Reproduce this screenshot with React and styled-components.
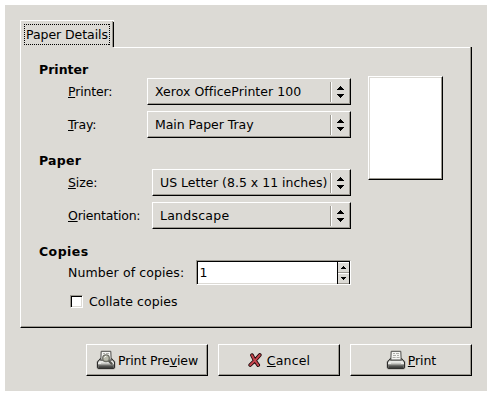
import React from "react";
import styled, { createGlobalStyle } from "styled-components";

const BG = "#dcdad5";
const SHADE = "#9b9890";

const GlobalStyle = createGlobalStyle`
  * { box-sizing: border-box; }
  body {
    margin: 0;
    background: #fff;
    color: #000;
    font-family: "DejaVu Sans", sans-serif;
    font-size: 12.5px;
    line-height: 18px;
  }
`;

const Dialog = styled.main`
  width: 482px;
  height: 386px;
  margin: 5px;
  padding: 15px;
  background: ${BG};
`;

const Tab = styled.div`
  display: flex;
  width: 94px;
  height: 27px;
  padding: 3px 2px 1px 3px;
  border-top: 1px solid #fff;
  border-left: 1px solid #fff;
  border-top-left-radius: 1px;
  background: linear-gradient(#000, #000) right 1px / 1px 100% no-repeat,
    linear-gradient(${SHADE}, ${SHADE}) right 1px top 0 / 1px 100% no-repeat;
`;

const FocusRing = styled.span`
  display: flex;
  align-items: center;
  justify-content: center;
  width: 86px;
  height: 21px;
  white-space: nowrap;
  background:
    repeating-linear-gradient(90deg, #000 0 1px, transparent 1px 2px) top / 100% 1px no-repeat,
    repeating-linear-gradient(90deg, #000 0 1px, transparent 1px 2px) bottom / 100% 1px no-repeat,
    repeating-linear-gradient(#000 0 1px, transparent 1px 2px) left / 1px 100% no-repeat,
    repeating-linear-gradient(#000 0 1px, transparent 1px 2px) right / 1px 100% no-repeat;
`;

const Page = styled.section`
  display: flex;
  gap: 17px;
  width: 452px;
  height: 281px;
  padding: 13px 0 0 18px;
  border-left: 1px solid #fff;
  border-right: 1px solid #000;
  border-bottom: 1px solid #000;
  box-shadow: inset -1px -1px ${SHADE};
  background: linear-gradient(#fff, #fff) 93px 0 / 100% 1px no-repeat;
`;

const Form = styled.div`
  display: flex;
  flex-direction: column;
  gap: 13px;
  width: 312px;
`;

const Group = styled.div`
  display: flex;
  flex-direction: column;
`;

const Heading = styled.h2`
  height: 18px;
  margin: 0;
  padding-top: 1px;
  font-size: 12.5px;
  line-height: 18px;
  font-weight: bold;
  letter-spacing: ${(p) => p.$track || 0}px;
`;

const Row = styled.div`
  display: flex;
  align-items: center;
  justify-content: space-between;
  padding-left: 29px;
  & + & { margin-top: 6px; }
`;

const Text = styled.span`
  white-space: nowrap;
  letter-spacing: ${(p) => p.$track || 0}px;
`;

const Key = styled.span`
  text-decoration: underline;
  text-decoration-thickness: 1px;
  text-underline-offset: 1px;
  text-decoration-skip-ink: none;
`;

const Raised = styled.div`
  border: 1px solid;
  border-color: #fff #000 #000 #fff;
  box-shadow: inset -1px -1px ${SHADE};
`;

const Select = styled(Raised)`
  display: flex;
  align-items: center;
  justify-content: space-between;
  width: ${(p) => p.$width}px;
  height: 27px;
  padding: 0 6px 0 7px;
`;

const SelectEnd = styled.span`
  display: flex;
  align-items: center;
  height: 20px;
  padding-left: 6px;
  border-left: 1px solid ${SHADE};
  box-shadow: inset 1px 0 #fff;
`;

const Preview = styled(Raised)`
  width: 75px;
  height: 104px;
  margin-top: 16px;
  background: #fff;
  box-shadow: inset -1px -1px ${SHADE}, inset 1px 1px ${BG};
`;

const Spin = styled.div`
  display: flex;
  justify-content: space-between;
  width: 155px;
  height: 25px;
  border: 1px solid;
  border-color: ${SHADE} #fff #fff ${SHADE};
  background: #fff;
  box-shadow: inset 1px 1px #000, inset 0 -1px ${BG};
`;

const SpinValue = styled.span`
  padding: 3px 0 0 2.5px;
`;

const SpinButtons = styled.div`
  display: flex;
  flex-direction: column;
  width: 13px;
  height: 22px;
  margin-top: 1px;
  border: solid #000;
  border-width: 0 1px;
  background: ${BG};
`;

const SpinStep = styled.span`
  display: flex;
  align-items: center;
  justify-content: center;
  height: 11px;
  border-top: 1px solid #fff;
  border-bottom: 1px solid ${SHADE};
`;

const CheckRow = styled.label`
  display: flex;
  align-items: center;
  gap: 6px;
  height: 13px;
  margin-top: 10px;
  padding-left: 31px;
`;

const CheckBox = styled.span`
  width: 13px;
  height: 13px;
  border: 1px solid;
  border-color: ${SHADE} #fff #fff ${SHADE};
  background: #fff;
  box-shadow: inset 1px 1px #000, inset -1px -1px ${BG};
`;

const Actions = styled.footer`
  display: flex;
  justify-content: flex-end;
  gap: 10px;
  width: 452px;
  margin-top: 16px;
`;

const Button = styled.button`
  display: flex;
  align-items: center;
  justify-content: center;
  gap: ${(p) => p.$gap || 2}px;
  width: 122px;
  height: 32px;
  padding: 2px 0 0;
  border: 1px solid;
  border-color: #fff #000 #000 #fff;
  border-radius: 0;
  background: ${BG};
  box-shadow: inset -1px -1px ${SHADE};
  color: #000;
  font: inherit;
`;

const Icon = styled.svg`
  display: block;
  flex: none;
`;

const ButtonIcon = styled(Icon)`
  margin-bottom: 2px;
`;

function Arrows() {
  return (
    <Icon width="7" height="12" viewBox="0 0 7 12" shapeRendering="crispEdges">
      <path d="M3 0h1v1h1v1h1v1h1v1H0V3h1V2h1V1h1zM0 8h7v1H6v1H5v1H4v1H3v-1H2v-1H1V9H0z" />
    </Icon>
  );
}

function StepArrow({ down }) {
  return (
    <Icon width="5" height="3" viewBox="0 0 5 3" shapeRendering="crispEdges">
      <path d={down ? "M0 0h5v1H4v1H3v1H2V2H1V1H0z" : "M2 0h1v1h1v1h1v1H0V2h1V1h1z"} />
    </Icon>
  );
}

function PrinterIcon({ preview }) {
  return (
    <ButtonIcon width="20" height="20" viewBox="0 0 20 20">
      <rect x="0.5" y="10" width="19" height="9.5" rx="2.5" fill="#55534f" opacity=".4" />
      <path d="M4.2 8.5h11.6l2.7 3.5v5q0 1.5-1.5 1.5H3q-1.5 0-1.5-1.5v-5z" fill="#8d8d89" stroke="#2c2c2b" />
      <path d="M5.2 1.3h9.6l.4 9.2H4.8z" fill="#f4f4f2" stroke="#4a4a48" />
      <path d="M7 3.5h2m1 0h3M7 5.5h3m1 0h2M6.6 7.5h3m1 0h3" stroke="#a6a6a2" strokeWidth=".9" />
      <path d="M4.5 10h11" stroke="#4c4c4a" />
      <path d="M3.5 10.8h13l1.5 1.7v2H2v-2z" fill="#e9e9e6" />
      <path d="M5 13.3h10" stroke="#bdbdb9" />
      <path d="M2 15.3h16" stroke="#6d6d6a" strokeWidth="1.4" />
      <path d="M2.5 17.2h15" stroke="#41413f" strokeWidth="2" />
      {preview && (
        <>
          <path d="M12.7 10.7l3 3" stroke="#55554f" strokeWidth="2.2" strokeLinecap="round" />
          <circle cx="10" cy="8.2" r="3.3" fill="#b9baac" stroke="#6f7067" strokeWidth="1.3" />
          <path d="M8.3 7.6q.7-1.3 2-1.3" fill="none" stroke="#fff" />
        </>
      )}
    </ButtonIcon>
  );
}

function CancelIcon() {
  return (
    <ButtonIcon width="14" height="16" viewBox="0 0 14 16" fill="none" strokeLinecap="round" strokeLinejoin="round">
      <path d="M4 3.2L6.2 7.5l4 5.6M11.8 3L7.6 7.8 2.2 13" stroke="#1a0506" strokeWidth="3.7" />
      <path d="M4 3.2L6.2 7.5l4 5.6M11.8 3L7.6 7.8 2.2 13" stroke="#c5454e" strokeWidth="2" />
    </ButtonIcon>
  );
}

function Combo({ width, track, children }) {
  return (
    <Select $width={width}>
      <Text $track={track}>{children}</Text>
      <SelectEnd><Arrows /></SelectEnd>
    </Select>
  );
}

export default function App() {
  return (
    <>
      <GlobalStyle />
      <Dialog>
        <Tab><FocusRing><Text $track={-0.06}>Paper Details</Text></FocusRing></Tab>
        <Page>
          <Form>
            <Group>
              <Heading $track={0.02}>Printer</Heading>
              <Row>
                <Text $track={-0.15}><Key>P</Key>rinter:</Text>
                <Combo width={204} track={0.04}>Xerox OfficePrinter 100</Combo>
              </Row>
              <Row>
                <Text $track={-0.2}><Key>T</Key>ray:</Text>
                <Combo width={204} track={-0.04}>Main Paper Tray</Combo>
              </Row>
            </Group>
            <Group>
              <Heading $track={0.25}>Paper</Heading>
              <Row>
                <Text $track={-0.1}><Key>S</Key>ize:</Text>
                <Combo width={199}>US Letter (8.5 x 11 inches)</Combo>
              </Row>
              <Row>
                <Text $track={-0.2}><Key>O</Key>rientation:</Text>
                <Combo width={199} track={0.25}>Landscape</Combo>
              </Row>
            </Group>
            <Group>
              <Heading $track={0.45}>Copies</Heading>
              <Row>
                <Text $track={0.1}>Number of copies:</Text>
                <Spin>
                  <SpinValue>1</SpinValue>
                  <SpinButtons>
                    <SpinStep><StepArrow /></SpinStep>
                    <SpinStep><StepArrow down /></SpinStep>
                  </SpinButtons>
                </Spin>
              </Row>
              <CheckRow><CheckBox /><Text $track={0.06}>Collate copies</Text></CheckRow>
            </Group>
          </Form>
          <Preview />
        </Page>
        <Actions>
          <Button><PrinterIcon preview /><Text $track={-0.1}>Print Pre<Key>v</Key>iew</Text></Button>
          <Button $gap={5}><CancelIcon /><Text $track={0.15}><Key>C</Key>ancel</Text></Button>
          <Button><PrinterIcon /><Text $track={-0.1}><Key>P</Key>rint</Text></Button>
        </Actions>
      </Dialog>
    </>
  );
}
